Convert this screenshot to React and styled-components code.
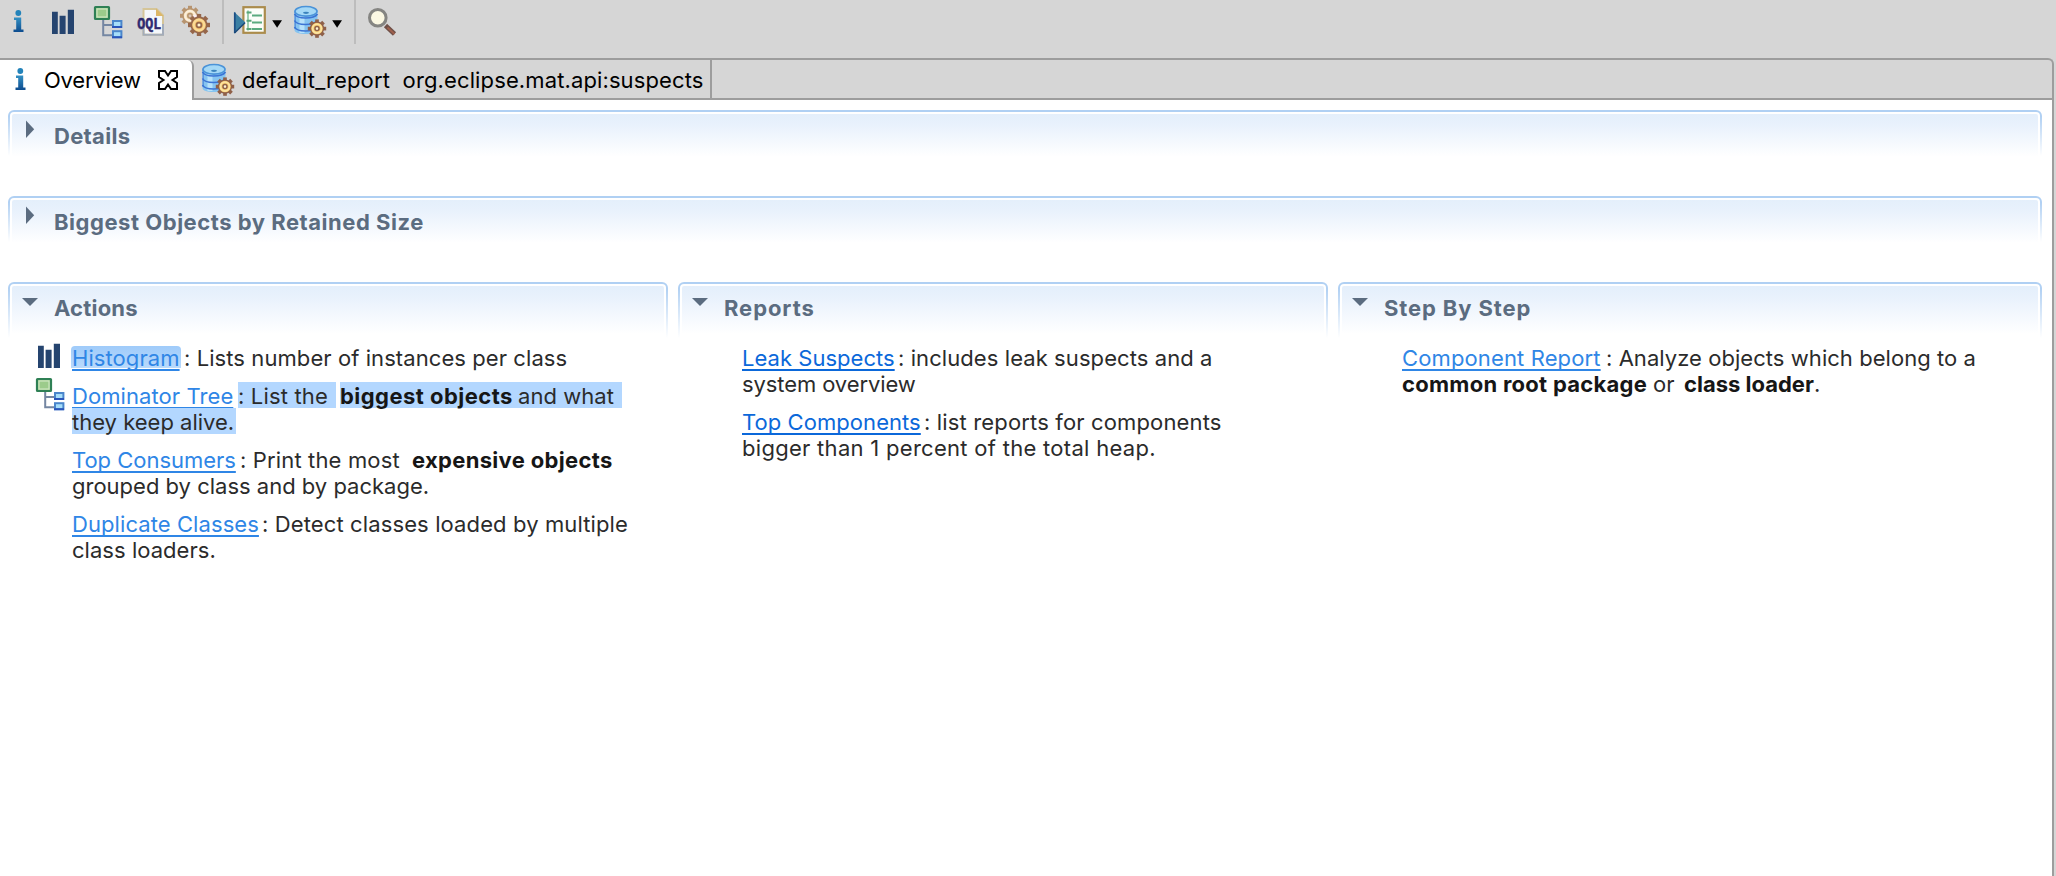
import React from "react";
import styled, { createGlobalStyle } from "styled-components";

const GlobalStyle = createGlobalStyle`
  * { box-sizing: border-box; }
  html, body { margin: 0; background: #fff; }
  body { font: 400 22px/26px Inter, "Liberation Sans", sans-serif; color: #2b2b2b; }
`;

/* ---------- shell ---------- */
const Window = styled.div`
  width: 2056px;
  height: 876px;
  overflow: hidden;
  display: flex;
  flex-direction: column;
  background: #d6d6d6;
`;
const Toolbar = styled.div`
  display: flex;
  height: 58px;
  flex: none;
`;
const Separator = styled.div`
  width: 2px;
  height: 44px;
  background: #bdbdbd;
`;
const Icon = styled.svg`
  display: block;
  flex: none;
  overflow: visible;
`;
const Folder = styled.div`
  flex: 1;
  display: flex;
  flex-direction: column;
  width: 2054px;
  border-top: 2px solid #9d9d9d;
  border-right: 2px solid #9d9d9d;
  border-top-right-radius: 6px;
`;
const TabBar = styled.div`
  display: flex;
  height: 40px;
  flex: none;
`;
const Tab = styled.div`
  display: flex;
  align-items: flex-start;
  width: ${(p) => p.$width}px;
  height: 40px;
  color: #000;
  background: ${(p) => (p.$active ? "#fff" : "transparent")};
  border-right: 2px solid #9d9d9d;
  border-bottom: ${(p) => (p.$active ? "none" : "2px solid #9d9d9d")};
  border-top-right-radius: ${(p) => (p.$active ? "6px" : "0")};
`;
const TabRest = styled.div`
  flex: 1;
  border-bottom: 2px solid #9d9d9d;
`;
const TabLabel = styled.span`
  flex: none;
  width: ${(p) => p.$width}px;
  padding-top: 7px;
  white-space: pre;
  letter-spacing: ${(p) => p.$spacing}px;
`;
const Page = styled.div`
  flex: 1;
  background: #fff;
  padding: 10px 10px 0 8px;
  display: flex;
  flex-direction: column;
  gap: 40px;
`;
const Columns = styled.div`
  display: grid;
  grid-template-columns: 660px 650px 704px;
  column-gap: 10px;
`;

/* ---------- sections ---------- */
const HeaderEdge = styled.div`
  height: ${(p) => p.$height}px;
  padding: 2px 2px 0;
  border-radius: 6px 6px 0 0;
  background: linear-gradient(#b0d0f3 0, #b0d0f3 6px, #fff 100%);
`;
const HeaderGap = styled.div`
  height: 100%;
  padding: 2px 2px 0;
  border-radius: 4px 4px 0 0;
  background: #fff;
`;
const HeaderFill = styled.div`
  display: flex;
  height: 100%;
  border-radius: 2px 2px 0 0;
  background: linear-gradient(#e4effb 0, #e8f1fc 10px, #fff ${(p) => p.$fade}px);
`;
const Title = styled.h2`
  margin: 0;
  padding-top: 9px;
  font-size: 22px;
  line-height: 26px;
  font-weight: 700;
  color: #5b6c80;
  white-space: pre;
  letter-spacing: ${(p) => p.$spacing}px;
`;
const ItemList = styled.div`
  display: flex;
  flex-direction: column;
  gap: 12px;
  padding-top: 6px;
`;
const Item = styled.div`
  display: flex;
`;
const ItemMark = styled.div`
  width: 64px;
  height: 26px;
`;
const Lines = styled.div`
  display: flex;
  flex-direction: column;
`;
const Line = styled.div`
  display: flex;
  height: 26px;
  line-height: 28px;
  white-space: pre;
`;
const Run = styled.span`
  flex: none;
  height: 26px;
  width: ${(p) => (p.$width ? p.$width + "px" : "auto")};
  padding-left: ${(p) => p.$pad || 0}px;
  margin-right: ${(p) => p.$after || 0}px;
  letter-spacing: ${(p) => p.$spacing || 0}px;
  background: ${(p) => (p.$selected ? "#b3d7ff" : "transparent")};
`;
const Strong = styled(Run).attrs({ as: "b" })`
  font-weight: 700;
  color: #161616;
`;
const LinkSlot = styled.span`
  flex: none;
  width: ${(p) => p.$width}px;
`;
const Link = styled.a`
  display: inline-block;
  height: 26px;
  letter-spacing: ${(p) => p.$spacing || 0}px;
  color: ${(p) => (p.$strong ? "#0b68da" : "#2f86e6")};
  text-decoration: underline;
  text-decoration-thickness: 2px;
  text-underline-offset: 3px;
  text-decoration-skip-ink: none;
  ${(p) =>
    p.$focused &&
    "margin: 2px 0 0 -1px; padding: 0 1px; height: 22px; line-height: 24px; border-radius: 4px 4px 0 0; background: linear-gradient(#9fcbfa, #b9dafc);"}
`;

/* ---------- icons, drawn in window coordinates ---------- */
const InfoArt = () => (
  <g>
    <defs>
      <linearGradient id="info" x1="0" y1="0" x2="0" y2="1">
        <stop offset="0" stopColor="#3391c4" />
        <stop offset="1" stopColor="#0d4b8e" />
      </linearGradient>
    </defs>
    <circle cx="18.3" cy="13" r="2.9" fill="#2383ba" />
    <path d="M14 17.5h7.2v12h2.3v2.6h-10v-2.6h2.7v-9.5h-2.2z" fill="url(#info)" />
  </g>
);
const BarsArt = () => (
  <path d="M52 11.8h5.8V34H52zM59.6 15.8h6V34h-6zM67.8 9.8h6.2V34h-6.2z" fill="#25446f" />
);
const TreeArt = () => (
  <g>
    <path d="M103.2 20v15.2h9M103.2 25h9" fill="none" stroke="#7486a2" strokeWidth="2" />
    <rect x="95" y="7" width="14" height="12" rx="0.5" fill="#9ccb8b" stroke="#2f8055" strokeWidth="2.2" />
    <rect x="97" y="9" width="10" height="8" fill="none" stroke="#cfe6c2" strokeWidth="1.2" />
    <rect x="113" y="21" width="8.4" height="6" fill="#a6defa" stroke="#4a86cb" strokeWidth="2" />
    <rect x="113" y="31.2" width="8.4" height="6" fill="#a6defa" stroke="#4a86cb" strokeWidth="2" />
    <path d="M112 27h10M112 37.2h10" stroke="#2a55ba" strokeWidth="2" />
  </g>
);
const OqlArt = () => (
  <g>
    <path d="M143.5 9h13l6.5 6.5V34.8h-19.5z" fill="#f4f7fb" stroke="#d5c598" strokeWidth="2" />
    <path d="M143.5 26v8.8H163V24" fill="none" stroke="#a3acba" strokeWidth="2" />
    <path d="M156 8.5v7.5h7.5z" fill="#dcb768" />
    <text x="137.3" y="29.3" fontFamily="Liberation Mono, monospace" fontWeight="700" fontSize="16.5" textLength="24" lengthAdjust="spacingAndGlyphs" fill="#2f2a70" stroke="#2f2a70" strokeWidth="0.5">OQL</text>
  </g>
);
const Gear = ({ x, y, r, fill, edge, light = "#fbe3a2", hole = "#fff3cf" }) => (
  <g transform={`translate(${x} ${y})`}>
    {[0, 45, 90, 135].map((a) => (
      <rect key={a} x={-r} y={-r * 0.2} width={2 * r} height={r * 0.4} fill={edge} transform={`rotate(${a})`} />
    ))}
    <circle r={r * 0.7} fill={fill} stroke={edge} strokeWidth={r * 0.15} />
    <circle r={r * 0.48} fill="none" stroke={light} strokeWidth={r * 0.2} />
    <circle r={r * 0.22} fill={hole} stroke={edge} strokeWidth={r * 0.16} />
  </g>
);
const GearsArt = () => (
  <g>
    <Gear x={190} y={15.8} r={10} fill="#f3dfb4" light="#fbeedd" edge="#b79470" hole="#dcc8ba" />
    <circle cx="196" cy="19.5" r="5" fill="#fbeef2" />
    <Gear x={199} y={25} r={11} fill="#efbd6a" light="#fadb97" edge="#96674b" />
  </g>
);
const ReportArt = () => (
  <g>
    <rect x="243.4" y="7.2" width="21.4" height="25.6" fill="#fbfdf8" stroke="#ab8c4c" strokeWidth="2.2" />
    <path d="M248 10.5v20" stroke="#78bb90" strokeWidth="1.4" />
    <path d="M246.5 12.5h5M246.5 20.8h5M246.5 29h5" stroke="#5aa67a" strokeWidth="2" />
    <path d="M252 15.5h10M252 22.5h10M252 29h10" stroke="#5aaa7e" strokeWidth="2" />
    <path d="M234 11.8L245.4 22.6L234 33.8z" fill="#3a7fa3" />
    <path d="M234.8 12.5V33" stroke="#1d4f86" strokeWidth="1.8" />
    <path d="M234.5 33L245 22.8" stroke="#1c4878" strokeWidth="1.4" />
  </g>
);
const DatabaseArt = () => (
  <g>
    <path d="M294.5 10v20c0 2.6 5 4 11 4s12-1.4 12-4V10z" fill="#86c4f0" />
    <path d="M295.2 11v18" stroke="#5a96dd" strokeWidth="1.6" />
    <path d="M302 15v18" stroke="#b7e2fa" strokeWidth="5" />
    {[15, 21.5, 28].map((y) => (
      <path key={y} d={`M294.5 ${y - 1}c1.5 3 5.5 4 11 4s10-1 12-4`} fill="none" stroke="#3c74d4" strokeWidth="1.6" />
    ))}
    <ellipse cx="306" cy="11.3" rx="11" ry="4.8" fill="#a4d8f6" stroke="#4b93d8" strokeWidth="1.6" />
    <ellipse cx="306" cy="12.8" rx="3" ry="1.1" fill="#3c83bd" />
    <Gear x={317} y={28.6} r={9.2} fill="#f3c466" edge="#8f6049" />
  </g>
);
const ArrowArt = ({ x }) => <path d={`M${x} 20.3h9.8L${x + 4.9} 27.8z`} fill="#000" />;
const MagnifierArt = () => (
  <g>
    <path d="M385.5 25.5L394.5 34" stroke="#6f5048" strokeWidth="4.6" />
    <path d="M387.5 27.5L394.5 34" stroke="#a0604c" strokeWidth="1.8" />
    <circle cx="377.8" cy="17.8" r="8.3" fill="#fbf8e3" stroke="#858582" strokeWidth="3" />
  </g>
);
const CloseArt = () => (
  <path d="M159 71h6l3 4.5l3-4.5h6v6l-4.5 3l4.5 3v6h-6l-3-4.5l-3 4.5h-6v-6l4.5-3l-4.5-3z" transform="translate(0 0)" fill="#fff" stroke="#000" strokeWidth="2" />
);
const Glyph = ({ x, y = 0, w, h = 44, children }) => (
  <Icon width={w} height={h} viewBox={`${x} ${y} ${w} ${h}`}>{children}</Icon>
);
const Twistie = ({ open }) => (
  <Icon width="42" height="26" viewBox="0 0 42 26">
    <path d={open ? "M10 12H26L18 20z" : "M14 6.5V24L22.2 15.2z"} fill="#5b6c80" />
  </Icon>
);

const SectionHeader = ({ title, spacing, open }) => (
  <HeaderEdge $height={open ? 56 : 46}>
    <HeaderGap>
      <HeaderFill $fade={open ? 48 : 43}>
        <Twistie open={open} />
        <Title $spacing={spacing}>{title}</Title>
      </HeaderFill>
    </HeaderGap>
  </HeaderEdge>
);

export default function App() {
  return (
    <>
      <GlobalStyle />
      <Window>
        <Toolbar>
          <Glyph x={0} w={44}><InfoArt /></Glyph>
          <Glyph x={44} w={44}><BarsArt /></Glyph>
          <Glyph x={88} w={44}><TreeArt /></Glyph>
          <Glyph x={132} w={44}><OqlArt /></Glyph>
          <Glyph x={176} w={46}><GearsArt /></Glyph>
          <Separator />
          <Glyph x={224} w={46}><ReportArt /></Glyph>
          <Glyph x={270} w={20}><ArrowArt x={272.2} /></Glyph>
          <Glyph x={290} w={40}><DatabaseArt /></Glyph>
          <Glyph x={330} w={24}><ArrowArt x={332.2} /></Glyph>
          <Separator />
          <Glyph x={356} w={44}><MagnifierArt /></Glyph>
        </Toolbar>
        <Folder>
          <TabBar>
            <Tab $active $width={194}>
              <Glyph x={-2} y={2} w={44} h={38}><InfoArt /></Glyph>
              <TabLabel $width={112} $spacing={-0.2}>Overview</TabLabel>
              <Glyph x={156} y={60} w={28} h={38}><CloseArt /></Glyph>
            </Tab>
            <Tab $width={518}>
              <Glyph x={286} y={2} w={48} h={36}><DatabaseArt /></Glyph>
              <TabLabel $width={468} $spacing={0.12}>default_report  org.eclipse.mat.api:suspects</TabLabel>
            </Tab>
            <TabRest />
          </TabBar>
          <Page>
            <SectionHeader title="Details" spacing={0.31} />
            <SectionHeader title="Biggest Objects by Retained Size" spacing={0.53} />
            <Columns>
              <section>
                <SectionHeader open title="Actions" spacing={0.2} />
                <ItemList>
                  <Item>
                    <ItemMark><Glyph x={22} y={10} w={64} h={26}><BarsArt /></Glyph></ItemMark>
                    <Lines>
                      <Line>
                        <LinkSlot $width={112}><Link $focused $spacing={0.08}>Histogram</Link></LinkSlot>
                        <Run $spacing={0.08}>: Lists number of instances per class</Run>
                      </Line>
                    </Lines>
                  </Item>
                  <Item>
                    <ItemMark><Glyph x={66} y={10} w={64} h={26}><TreeArt /></Glyph></ItemMark>
                    <Lines>
                      <Line>
                        <LinkSlot $width={166}><Link $spacing={0.08}>Dominator Tree</Link></LinkSlot>
                        <Run $selected $width={98} $after={4} $spacing={0.17}>: List the </Run>
                        <Strong $selected $width={178} $spacing={0.46}>biggest objects</Strong>
                        <Run $selected $width={104} $spacing={0.05}>and what</Run>
                      </Line>
                      <Line>
                        <Run $selected $width={164}>they keep alive.</Run>
                      </Line>
                    </Lines>
                  </Item>
                  <Item>
                    <ItemMark />
                    <Lines>
                      <Line>
                        <LinkSlot $width={168}><Link $spacing={-0.03}>Top Consumers</Link></LinkSlot>
                        <Run $width={172} $spacing={0.15}>: Print the most </Run>
                        <Strong $spacing={0.32}>expensive objects</Strong>
                      </Line>
                      <Line><Run>grouped by class and by package.</Run></Line>
                    </Lines>
                  </Item>
                  <Item>
                    <ItemMark />
                    <Lines>
                      <Line>
                        <LinkSlot $width={190}><Link $spacing={0.08}>Duplicate Classes</Link></LinkSlot>
                        <Run $spacing={0.12}>: Detect classes loaded by multiple</Run>
                      </Line>
                      <Line><Run $spacing={0.04}>class loaders.</Run></Line>
                    </Lines>
                  </Item>
                </ItemList>
              </section>
              <section>
                <SectionHeader open title="Reports" spacing={0.93} />
                <ItemList>
                  <Item>
                    <ItemMark />
                    <Lines>
                      <Line>
                        <LinkSlot $width={156}><Link $strong $spacing={0.03}>Leak Suspects</Link></LinkSlot>
                        <Run $spacing={0.08}>: includes leak suspects and a</Run>
                      </Line>
                      <Line><Run $spacing={-0.1}>system overview</Run></Line>
                    </Lines>
                  </Item>
                  <Item>
                    <ItemMark />
                    <Lines>
                      <Line>
                        <LinkSlot $width={182}><Link $strong $spacing={0.06}>Top Components</Link></LinkSlot>
                        <Run $spacing={0.15}>: list reports for components</Run>
                      </Line>
                      <Line><Run $spacing={0.29}>bigger than 1 percent of the total heap.</Run></Line>
                    </Lines>
                  </Item>
                </ItemList>
              </section>
              <section>
                <SectionHeader open title="Step By Step" spacing={0.88} />
                <ItemList>
                  <Item>
                    <ItemMark />
                    <Lines>
                      <Line>
                        <LinkSlot $width={204}><Link $spacing={0.13}>Component Report</Link></LinkSlot>
                        <Run $spacing={0.05}>: Analyze objects which belong to a</Run>
                      </Line>
                      <Line>
                        <Strong $width={251} $spacing={0.27}>common root package</Strong>
                        <Run $width={31}>or</Run>
                        <Strong $width={130}>class loader</Strong>
                        <Run>.</Run>
                      </Line>
                    </Lines>
                  </Item>
                </ItemList>
              </section>
            </Columns>
          </Page>
        </Folder>
      </Window>
    </>
  );
}
